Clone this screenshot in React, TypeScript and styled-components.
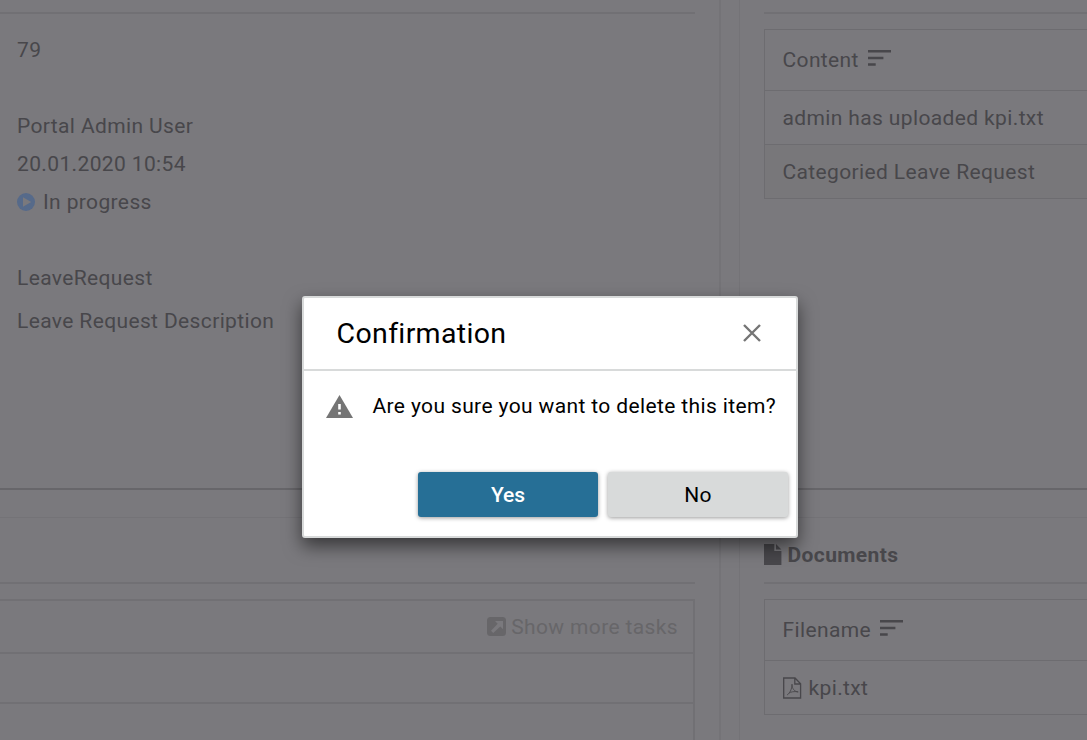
import React from "react";
import styled, { createGlobalStyle } from "styled-components";

const color = {
  page: "#7a797d",
  text: "#48474b",
  muted: "#676669",
  line: "#717074",
  tableLine: "#6d6c70",
  stripe: "#78777a",
  info: "#566a8a",
};

const GlobalStyle = createGlobalStyle`
  * { box-sizing: border-box; }
  body {
    margin: 0;
    overflow: hidden;
    background: ${color.page};
    color: ${color.text};
    font-family: Roboto, "Liberation Sans", sans-serif;
    font-size: 21px;
    letter-spacing: 0.37px;
  }
  svg { display: block; flex: none; }
`;

const Page = styled.main`
  width: 1087px;
  height: 740px;
  overflow: hidden;
  display: grid;
  grid-template-columns: 721px 348px;
  grid-template-rows: 490px 223px;
  column-gap: 18px;
  row-gap: 27px;
`;

const Panel = styled.section<{ $side: "left" | "right"; $last?: boolean }>`
  display: flex;
  flex-direction: column;
  min-width: 0;
  border-left: ${(p) => (p.$side === "right" ? `1px solid #747377` : "0")};
  border-right: ${(p) => (p.$side === "left" ? `2px solid #747377` : "0")};
  border-top: ${(p) => (p.$last ? "1px solid #747377" : "0")};
  border-bottom: ${(p) => (p.$last ? "0" : "2px solid #67666a")};
  padding: 0 ${(p) => (p.$side === "left" ? 24 : 0)}px 0 ${(p) => (p.$side === "right" ? 24 : 0)}px;
`;

const PanelHead = styled.header<{ $height: number }>`
  flex: none;
  height: ${(p) => p.$height}px;
  border-bottom: 2px solid ${color.line};
  display: flex;
  align-items: center;
  gap: 5.6px;
  font-weight: 700;
  letter-spacing: 0.37px;
  padding-top: 9px;
`;

const Details = styled.div`
  padding: 17px 0 0 17px;
`;

const DetailRow = styled.div<{ $space?: number }>`
  height: 38px;
  margin-top: ${(p) => p.$space ?? 0}px;
  display: flex;
  align-items: center;
  gap: 8px;
  white-space: nowrap;
`;

const Table = styled.div`
  margin-top: 15px;
  border: 1px solid ${color.tableLine};
  border-right: 0;
`;

const TableRow = styled.div<{ $head?: boolean; $striped?: boolean }>`
  height: ${(p) => (p.$head ? 61 : 54)}px;
  border-bottom: 1px solid ${color.tableLine};
  background: ${(p) => (p.$striped ? color.stripe : "transparent")};
  padding-left: 17.5px;
  display: flex;
  align-items: center;
  gap: ${(p) => (p.$head ? 9 : 7)}px;
  white-space: nowrap;
  &:last-child { border-bottom: 0; height: 53px; }
`;

const TaskList = styled.div`
  margin-top: 15px;
  flex: 1;
  border: 2px solid ${color.line};
  border-left: 0;
  border-bottom: 0;
`;

const TaskRow = styled.div<{ $height: number }>`
  height: ${(p) => p.$height}px;
  border-bottom: 2px solid ${color.line};
  display: flex;
  align-items: center;
  justify-content: flex-end;
  gap: 5px;
  padding-right: 15px;
  color: ${color.muted};
`;

const Dialog = styled.div`
  position: absolute;
  left: 302px;
  top: 296px;
  width: 496px;
  height: 242px;
  background: #fff;
  border: 2px solid #d8dada;
  border-radius: 3px;
  box-shadow: 0 8px 18px rgba(0, 0, 0, 0.55);
  color: #000;
  display: flex;
  flex-direction: column;
`;

const DialogHead = styled.div`
  height: 73px;
  border-bottom: 2px solid #d8dada;
  padding: 0 35px 0 32.6px;
  display: flex;
  align-items: center;
  justify-content: space-between;
  font-size: 28.5px;
  letter-spacing: 0.33px;
`;

const CloseButton = styled.button`
  border: 0;
  padding: 0 0 2px;
  background: none;
`;

const Message = styled.div`
  height: 70px;
  padding-left: 22px;
  display: flex;
  align-items: center;
  gap: 19.5px;
  white-space: nowrap;
`;

const Actions = styled.div`
  display: flex;
  justify-content: flex-end;
  gap: 10px;
  margin-top: 31px;
  padding-right: 8px;
`;

const Button = styled.button<{ $primary?: boolean }>`
  width: 180px;
  height: 45px;
  padding: 0;
  border: 0;
  border-radius: 3px;
  background: ${(p) => (p.$primary ? "#266f96" : "#d8dada")};
  color: ${(p) => (p.$primary ? "#fff" : "#000")};
  font: ${(p) => (p.$primary ? 500 : 400)} 21px Roboto, "Liberation Sans", sans-serif;
  letter-spacing: ${(p) => (p.$primary ? 0 : 0.3)}px;
  box-shadow: 0 1px 4px rgba(0, 0, 0, 0.4);
`;

const SortMark = styled.svg`
  margin-top: -5px;
`;

const SortIcon = () => (
  <SortMark width="23" height="16" viewBox="0 0 23 16" fill="currentColor">
    <path d="M0 0h23v2.5H0zM0 6.8h15.4v2.4H0zM0 13.3h7.7v2.5H0z" />
  </SortMark>
);

const PlayIcon = () => (
  <svg width="18" height="18" viewBox="0 0 18 18">
    <circle cx="9" cy="9" r="9" fill={color.info} />
    <path d="M6 4.3v9.4L14.2 9z" fill={color.page} />
  </svg>
);

const FileIcon = () => (
  <svg width="18" height="21" viewBox="0 0 18 21" fill="currentColor">
    <path d="M0 0h10.3v7H17.4v14H0zM12 0l5.4 5.5H12z" />
  </svg>
);

const PdfIcon = () => (
  <svg width="19" height="22" viewBox="0 0 19 22" fill="none" stroke="currentColor" strokeWidth="1.3">
    <path d="M.7 1h11.3L17.6 6.8V21H.7zM11.8 1v6h6" />
    <path d="M4 18c2.5-1.5 5-5.5 5-10.8 0 4.8 2.7 7.5 6.2 7.7-4-.8-7.5 0-9.4 1.3" strokeWidth=".9" />
  </svg>
);

const OpenIcon = () => (
  <svg width="19" height="19" viewBox="0 0 19 19">
    <rect width="19" height="19" rx="3.5" fill={color.muted} />
    <path d="M8 4h8v8.2l-2.7-2.7-7.1 6.5-2.2-2.2 6.7-7z" fill={color.page} />
  </svg>
);

const WarningIcon = () => (
  <svg width="27" height="23" viewBox="0 0 27 23">
    <path d="M13.5 0 27 23H0z" fill="#757575" />
    <path d="M12.2 9h2.6v5.5h-2.6zM12.2 17h2.6v2.5h-2.6z" fill="#fff" />
  </svg>
);

const CloseIcon = () => (
  <svg width="18" height="18" viewBox="0 0 18 18" stroke="#757575" strokeWidth="2.4">
    <path d="m1 1 16 16M17 1 1 17" />
  </svg>
);

export default function App() {
  return (
    <>
      <GlobalStyle />
      <Page>
        <Panel $side="left">
          <PanelHead $height={14} />
          <Details>
            <DetailRow>79</DetailRow>
            <DetailRow $space={38}>Portal Admin User</DetailRow>
            <DetailRow>20.01.2020 10:54</DetailRow>
            <DetailRow>
              <PlayIcon />
              In progress
            </DetailRow>
            <DetailRow $space={38}>LeaveRequest</DetailRow>
            <DetailRow $space={5}>Leave Request Description</DetailRow>
          </Details>
        </Panel>
        <Panel $side="right">
          <PanelHead $height={14} />
          <Table>
            <TableRow $head>
              Content
              <SortIcon />
            </TableRow>
            <TableRow>admin has uploaded kpi.txt</TableRow>
            <TableRow $striped>Categoried Leave Request</TableRow>
          </Table>
        </Panel>
        <Panel $side="left" $last>
          <PanelHead $height={66} />
          <TaskList>
            <TaskRow $height={53}>
              <OpenIcon />
              Show more tasks
            </TaskRow>
            <TaskRow $height={50} />
          </TaskList>
        </Panel>
        <Panel $side="right" $last>
          <PanelHead $height={66}>
            <FileIcon />
            Documents
          </PanelHead>
          <Table>
            <TableRow $head>
              Filename
              <SortIcon />
            </TableRow>
            <TableRow>
              <PdfIcon />
              kpi.txt
            </TableRow>
          </Table>
        </Panel>
      </Page>
      <Dialog role="dialog" aria-label="Confirmation">
        <DialogHead>
          Confirmation
          <CloseButton aria-label="Close">
            <CloseIcon />
          </CloseButton>
        </DialogHead>
        <Message>
          <WarningIcon />
          Are you sure you want to delete this item?
        </Message>
        <Actions>
          <Button $primary>Yes</Button>
          <Button>No</Button>
        </Actions>
      </Dialog>
    </>
  );
}
